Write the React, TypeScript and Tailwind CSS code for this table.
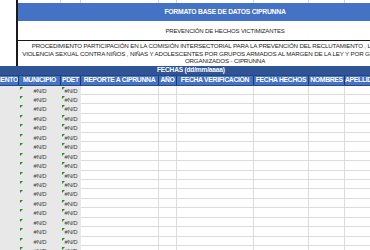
import React from 'react';

const cols = [
  { label: 'DEPARTAMENTO', w: 'w-[19px]', align: 'justify-end' },
  { label: 'MUNICIPIO', w: 'w-[42px]', align: 'justify-center' },
  { label: 'PDET', w: 'w-[20px]', align: 'justify-center' },
  { label: 'REPORTE A CIPRUNNA', w: 'w-[78px]', align: 'justify-center' },
  { label: 'AÑO', w: 'w-[18px]', align: 'justify-center' },
  { label: 'FECHA VERIFICACIÓN', w: 'w-[77px]', align: 'justify-center' },
  { label: 'FECHA HECHOS', w: 'w-[55px]', align: 'justify-center' },
  { label: 'NOMBRES', w: 'w-[36px]', align: 'justify-center' },
  { label: 'APELLIDOS', w: 'w-[80px]', align: 'justify-start' },
];

const rowHeights = [9, 9, 10, 9, 10, 9, 10, 9, 10, 9, 9, 10, 9, 10, 9, 10, 9, 10];

const Flag = () => (
  <span className="absolute left-[1px] top-[1px] w-0 h-0 border-t-[3px] border-r-[3px] border-t-[#1f8f1f] border-r-transparent" />
);

const NA = () => <span className="text-[6px] tracking-[-0.2px] leading-none text-[#3a3a3a]">#N/D</span>;

export default function App() {
  return (
    <div className="w-[370px] h-[250px] overflow-hidden bg-white font-['Liberation_Sans',Arial,sans-serif]">
      <div className="w-[600px]">
        {/* title block */}
        <div className="flex h-[66px]">
          <div className="w-[18px] shrink-0 bg-white border-r-2 border-[#1a1a1a]" />
          <div className="w-[414px] shrink-0 flex flex-col">
            <div className="flex h-[3px]">
              <div className="w-[43px] border-r border-[#d4d4d4]" />
              <div className="w-[20px] border-r border-[#d4d4d4]" />
              <div className="w-[78px] border-r border-[#d4d4d4]" />
              <div className="w-[18px] border-r border-[#d4d4d4]" />
              <div className="w-[77px] border-r border-[#d4d4d4]" />
              <div className="w-[55px] border-r border-[#d4d4d4]" />
              <div className="w-[36px] border-r border-[#d4d4d4]" />
            </div>
            <div className="h-[18px] bg-[#4472c4] flex items-center justify-center text-white font-bold text-[6.8px] tracking-[-0.25px] leading-none">
              FORMATO BASE DE DATOS CIPRUNNA
            </div>
            <div className="h-[20px] bg-white border-b border-[#1a1a1a] flex items-center justify-center text-[6px] tracking-[-0.15px] leading-none text-[#222]">
              PREVENCIÓN DE HECHOS VICTIMIZANTES
            </div>
            <div className="h-[25px] flex flex-col items-center justify-center text-[6.2px] tracking-[-0.15px] leading-[7.7px] text-[#222] text-center whitespace-nowrap">
              <span>PROCEDIMIENTO PARTICIPACIÓN EN LA COMISIÓN INTERSECTORIAL PARA LA PREVENCIÓN DEL RECLUTAMIENTO , LA UTILIZACIÓN Y</span>
              <span>VIOLENCIA SEXUAL CONTRA NIÑOS , NIÑAS Y ADOLESCENTES POR GRUPOS ARMADOS AL MARGEN DE LA LEY Y POR GRUPOS DELICTIVOS</span>
              <span>ORGANIZADOS - CIPRUNNA</span>
            </div>
          </div>
        </div>

        {/* dates band */}
        <div className="h-[10px] bg-[#2f5597] border-b border-[#24467f] flex items-center">
          <span className="pl-[157px] text-white font-bold text-[6.6px] tracking-[-0.2px] leading-none">FECHAS (dd/mm/aaaa)</span>
        </div>

        {/* column headers */}
        <div className="flex h-[10px] bg-[#4472c4] border-b border-[#2a4a85]">
          {cols.map((c) => (
            <div
              key={c.label}
              className={`${c.w} shrink-0 flex items-center ${c.align} overflow-hidden whitespace-nowrap border-r border-[#1f3864] text-white font-bold text-[6.8px] tracking-[-0.3px] leading-none`}
            >
              {c.label}
            </div>
          ))}
        </div>

        {/* data rows */}
        {rowHeights.map((h, i) => (
          <div key={i} className={`flex ${h === 9 ? 'h-[9px]' : 'h-[10px]'}`}>
            <div className="w-[19px] shrink-0 bg-[#e8e8e8]" />
            <div className="relative w-[42px] shrink-0 bg-[#e8e8e8] flex items-center justify-center">
              <Flag />
              <NA />
            </div>
            <div className="relative w-[20px] shrink-0 bg-[#e8e8e8] flex items-center justify-center">
              <Flag />
              <NA />
            </div>
            <div className="w-[78px] shrink-0 border-r border-b border-[#dcdcdc]" />
            <div className="w-[18px] shrink-0 border-r border-b border-[#dcdcdc]" />
            <div className="w-[77px] shrink-0 border-r border-b border-[#dcdcdc]" />
            <div className="w-[55px] shrink-0 border-r border-b border-[#dcdcdc]" />
            <div className="w-[36px] shrink-0 border-r border-b border-[#dcdcdc]" />
            <div className="w-[80px] shrink-0 border-r border-b border-[#dcdcdc]" />
          </div>
        ))}
      </div>
    </div>
  );
}
